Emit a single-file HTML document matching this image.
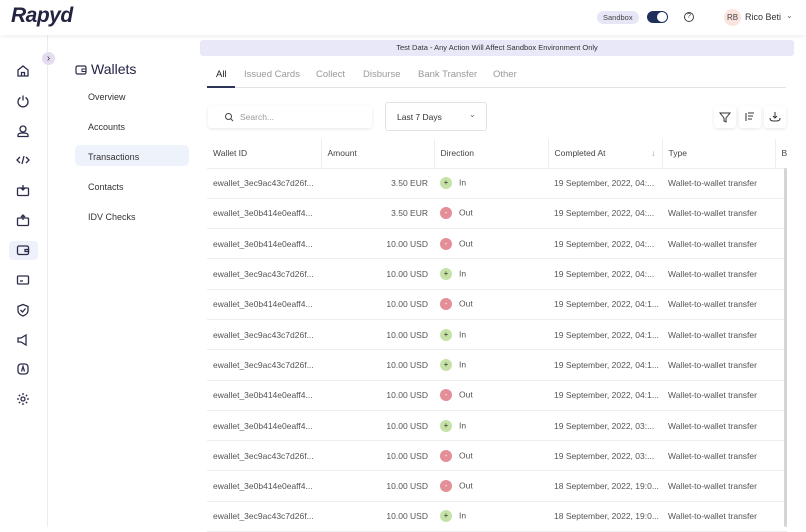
<!DOCTYPE html>
<html><head><meta charset="utf-8"><style>
*{box-sizing:border-box;margin:0;padding:0}
body{width:806px;height:527px;overflow:hidden;background:#fff;font-family:"Liberation Sans",sans-serif;color:#333;position:relative}
.hdr{position:absolute;left:0;top:0;width:806px;height:35px;background:#fff;box-shadow:0 2px 4px rgba(0,0,0,.06);z-index:2}
.logo{position:absolute;left:11px;top:4px;font-size:21px;font-weight:bold;font-style:italic;color:#232342;letter-spacing:-.5px}
.sb{position:absolute;left:0;top:35px;width:48px;height:492px;border-right:1px solid #ececf0}
.ic{position:absolute;left:16px;width:14px;height:14px}
.ic svg{width:14px;height:14px;stroke:#2c2c4a;fill:none;stroke-width:1.3}
.act{position:absolute;left:9px;top:206px;width:29px;height:19px;background:#eef1fa;border-radius:4px}
.tog{position:absolute;left:42px;top:52px;width:13px;height:13px;border-radius:50%;background:#e5dcef;font-size:10px;text-align:center;line-height:13px;color:#333}
.nav{position:absolute;font-size:9px;color:#333}
.t{position:absolute;font-size:8.5px;white-space:nowrap}
table{position:absolute;left:207px;top:139px;border-collapse:collapse;font-size:8.5px;width:580px;table-layout:fixed}
td,th{height:30.3px;border-bottom:1px solid #eeeef2;white-space:nowrap;overflow:hidden;padding:0 6px;color:#555;font-weight:normal;text-align:left}
th{height:29px;color:#444}
.dot{display:inline-block;width:12px;height:12px;border-radius:50%;vertical-align:middle;margin-right:7px;text-align:center;line-height:12px;font-size:8px;color:#333}
.in{background:#c5e3a7}.out{background:#e48e98;color:#fff}
.btn{position:absolute;top:106px;width:22px;height:22px;background:#fff;box-shadow:0 1px 3px rgba(0,0,0,.1);border-radius:3px}
</style></head><body>
<div class="hdr">
<div class="logo">Rapyd</div>
<div class="t" style="left:597px;top:11px;background:#e7e6f7;border-radius:7px;padding:2px 6px;font-size:7.5px;color:#444">Sandbox</div>
<div style="position:absolute;left:647px;top:11px;width:21px;height:12px;border-radius:6px;background:#1f2f5c"><div style="position:absolute;right:1px;top:1px;width:10px;height:10px;border-radius:50%;background:#fff"></div></div>
<div style="position:absolute;left:684px;top:12px;width:10px;height:10px;border:1px solid #444;border-radius:50%;font-size:7px;text-align:center;line-height:8px">?</div>
<div class="t" style="left:724px;top:9px;width:17px;height:17px;border-radius:50%;background:#fbe4e0;font-size:8px;line-height:17px;text-align:center;color:#444">RB</div>
<div class="t" style="left:745px;top:12px;font-size:9px;color:#333">Rico Beti</div>
<div class="t" style="left:786px;top:11px;font-size:8px;color:#666">⌄</div>
</div>
<div class="sb">
<div class="act"></div>
</div>
<div class="tog">›</div>
<div class="ic" style="top:64px"><svg viewBox="0 0 14 14"><path d="M2 6l5-4 5 4v6H2z M5.5 12V8.5h3V12"/></svg></div>
<div class="ic" style="top:94px"><svg viewBox="0 0 14 14"><path d="M4.5 3.5a5 5 0 1 0 5 0M7 1.5v5"/></svg></div>
<div class="ic" style="top:124px"><svg viewBox="0 0 14 14"><circle cx="7" cy="5" r="3"/><path d="M2 12.5h10v-1.5c0-1-1-2-5-2s-5 1-5 2z"/></svg></div>
<div class="ic" style="top:153px"><svg viewBox="0 0 14 14"><path d="M4 4L1 7l3 3M10 4l3 3-3 3M8 3l-2 8"/></svg></div>
<div class="ic" style="top:183px"><svg viewBox="0 0 14 14"><rect x="1.5" y="5" width="11" height="7.5" rx="1"/><path d="M7 2v5M5 5l2 2 2-2"/></svg></div>
<div class="ic" style="top:213px"><svg viewBox="0 0 14 14"><rect x="1.5" y="5" width="11" height="7.5" rx="1"/><path d="M7 7V2M5 4l2-2 2 2"/></svg></div>
<div class="ic" style="top:243px"><svg viewBox="0 0 14 14"><rect x="1.5" y="3" width="11" height="8.5" rx="1.5"/><path d="M9 6.5h3.5v2H9z"/></svg></div>
<div class="ic" style="top:273px"><svg viewBox="0 0 14 14"><rect x="1.5" y="3" width="11" height="8" rx="1"/><path d="M4 8h3"/></svg></div>
<div class="ic" style="top:303px"><svg viewBox="0 0 14 14"><path d="M7 1.5l5 2v4c0 3-2.5 4.5-5 5.5-2.5-1-5-2.5-5-5.5v-4z M4.5 7l2 2 3-3.5"/></svg></div>
<div class="ic" style="top:333px"><svg viewBox="0 0 14 14"><path d="M2 5h3l5-3v10L5 9H2z"/></svg></div>
<div class="ic" style="top:362px"><svg viewBox="0 0 14 14"><rect x="2" y="2" width="10" height="10" rx="3"/><path d="M5.5 9.5L7 4.5l1.5 5"/></svg></div>
<div class="ic" style="top:392px"><svg viewBox="0 0 14 14"><circle cx="7" cy="7" r="2"/><path d="M7 1v2M7 11v2M1 7h2M11 7h2M2.8 2.8l1.4 1.4M9.8 9.8l1.4 1.4M2.8 11.2l1.4-1.4M9.8 4.2l1.4-1.4"/></svg></div>

<svg style="position:absolute;left:75px;top:64px" width="12" height="11" viewBox="0 0 12 11"><rect x="1" y="2" width="10" height="8" rx="1.5" fill="none" stroke="#2c2c4a" stroke-width="1.2"/><path d="M7 5h4v2.5H7z" fill="none" stroke="#2c2c4a"/></svg>
<div class="t" style="left:91px;top:61px;font-size:14px;color:#232342">Wallets</div>
<div class="nav" style="left:88px;top:92px">Overview</div>
<div class="nav" style="left:88px;top:122px">Accounts</div>
<div style="position:absolute;left:75px;top:145px;width:114px;height:21px;background:#eef2fb;border-radius:5px"></div>
<div class="nav" style="left:88px;top:152px">Transactions</div>
<div class="nav" style="left:88px;top:182px">Contacts</div>
<div class="nav" style="left:88px;top:212px">IDV Checks</div>

<div style="position:absolute;left:200px;top:40px;width:594px;height:16px;background:#e9e8f8;border-radius:3px;font-size:7.5px;text-align:center;line-height:16px;color:#333">Test Data - Any Action Will Affect Sandbox Environment Only</div>
<div style="position:absolute;left:207px;top:87px;width:579px;height:1px;background:#e2e2e6"></div>
<div style="position:absolute;left:207px;top:86px;width:28px;height:2px;background:#2c3558"></div>
<div class="t" style="left:216px;top:69px;font-size:9.5px;color:#222">All</div>
<div class="t" style="left:244px;top:69px;font-size:9.5px;color:#999">Issued Cards</div>
<div class="t" style="left:316px;top:69px;font-size:9.5px;color:#999">Collect</div>
<div class="t" style="left:363px;top:69px;font-size:9.5px;color:#999">Disburse</div>
<div class="t" style="left:418px;top:69px;font-size:9.5px;color:#999">Bank Transfer</div>
<div class="t" style="left:493px;top:69px;font-size:9.5px;color:#999">Other</div>

<div style="position:absolute;left:208px;top:106px;width:164px;height:22px;background:#fff;box-shadow:0 1px 3px rgba(0,0,0,.1);border-radius:3px"></div>
<svg style="position:absolute;left:224px;top:112px" width="10" height="10" viewBox="0 0 10 10"><circle cx="4.5" cy="4.5" r="3" fill="none" stroke="#444"/><path d="M7 7l2 2" stroke="#444"/></svg>
<div class="t" style="left:240px;top:112px;color:#999">Search...</div>
<div style="position:absolute;left:385px;top:102px;width:102px;height:29px;border:1px solid #e2e2e6;border-radius:3px"></div>
<div class="t" style="left:397px;top:112px;color:#333">Last 7 Days</div>
<div class="t" style="left:469px;top:110px;font-size:8px;color:#666">⌄</div>
<div class="btn" style="left:714px"><svg width="22" height="22" viewBox="0 0 22 22"><path d="M6 7h10l-4 5v4l-2-1v-3z" fill="none" stroke="#333"/></svg></div>
<div class="btn" style="left:739px"><svg width="22" height="22" viewBox="0 0 22 22"><path d="M7 7v8M9 7h6M9 10h5M9 13h4" stroke="#333"/></svg></div>
<div class="btn" style="left:764px"><svg width="22" height="22" viewBox="0 0 22 22"><path d="M11 6v6M9 10l2 2 2-2M6 12c0 3 2 3 5 3s5 0 5-3" fill="none" stroke="#333"/></svg></div>

<table>
<colgroup><col style="width:114px"><col style="width:113px"><col style="width:114px"><col style="width:114px"><col style="width:113px"><col></colgroup>
<tr><th style="border-right:1px solid #eee">Wallet ID</th><th style="border-right:1px solid #eee">Amount</th><th style="border-right:1px solid #eee">Direction</th><th style="border-right:1px solid #eee">Completed At <span style="float:right;color:#999">↓</span></th><th style="border-right:1px solid #eee">Type</th><th>B</th></tr>
<tr><td>ewallet_3ec9ac43c7d26f...</td><td style="text-align:right">3.50 EUR</td><td><span class="dot in">+</span>In</td><td>19 September, 2022, 04:...</td><td>Wallet-to-wallet transfer</td><td></td></tr>
<tr><td>ewallet_3e0b414e0eaff4...</td><td style="text-align:right">3.50 EUR</td><td><span class="dot out">-</span>Out</td><td>19 September, 2022, 04:...</td><td>Wallet-to-wallet transfer</td><td></td></tr>
<tr><td>ewallet_3e0b414e0eaff4...</td><td style="text-align:right">10.00 USD</td><td><span class="dot out">-</span>Out</td><td>19 September, 2022, 04:...</td><td>Wallet-to-wallet transfer</td><td></td></tr>
<tr><td>ewallet_3ec9ac43c7d26f...</td><td style="text-align:right">10.00 USD</td><td><span class="dot in">+</span>In</td><td>19 September, 2022, 04:...</td><td>Wallet-to-wallet transfer</td><td></td></tr>
<tr><td>ewallet_3e0b414e0eaff4...</td><td style="text-align:right">10.00 USD</td><td><span class="dot out">-</span>Out</td><td>19 September, 2022, 04:1...</td><td>Wallet-to-wallet transfer</td><td></td></tr>
<tr><td>ewallet_3ec9ac43c7d26f...</td><td style="text-align:right">10.00 USD</td><td><span class="dot in">+</span>In</td><td>19 September, 2022, 04:1...</td><td>Wallet-to-wallet transfer</td><td></td></tr>
<tr><td>ewallet_3ec9ac43c7d26f...</td><td style="text-align:right">10.00 USD</td><td><span class="dot in">+</span>In</td><td>19 September, 2022, 04:1...</td><td>Wallet-to-wallet transfer</td><td></td></tr>
<tr><td>ewallet_3e0b414e0eaff4...</td><td style="text-align:right">10.00 USD</td><td><span class="dot out">-</span>Out</td><td>19 September, 2022, 04:1...</td><td>Wallet-to-wallet transfer</td><td></td></tr>
<tr><td>ewallet_3e0b414e0eaff4...</td><td style="text-align:right">10.00 USD</td><td><span class="dot in">+</span>In</td><td>19 September, 2022, 03:...</td><td>Wallet-to-wallet transfer</td><td></td></tr>
<tr><td>ewallet_3ec9ac43c7d26f...</td><td style="text-align:right">10.00 USD</td><td><span class="dot out">-</span>Out</td><td>19 September, 2022, 03:...</td><td>Wallet-to-wallet transfer</td><td></td></tr>
<tr><td>ewallet_3e0b414e0eaff4...</td><td style="text-align:right">10.00 USD</td><td><span class="dot out">-</span>Out</td><td>18 September, 2022, 19:0...</td><td>Wallet-to-wallet transfer</td><td></td></tr>
<tr><td>ewallet_3ec9ac43c7d26f...</td><td style="text-align:right">10.00 USD</td><td><span class="dot in">+</span>In</td><td>18 September, 2022, 19:0...</td><td>Wallet-to-wallet transfer</td><td></td></tr>
</table>
<div style="position:absolute;left:784px;top:168px;width:3px;height:359px;background:#d5d5d8;border-radius:2px"></div>
</body></html>
